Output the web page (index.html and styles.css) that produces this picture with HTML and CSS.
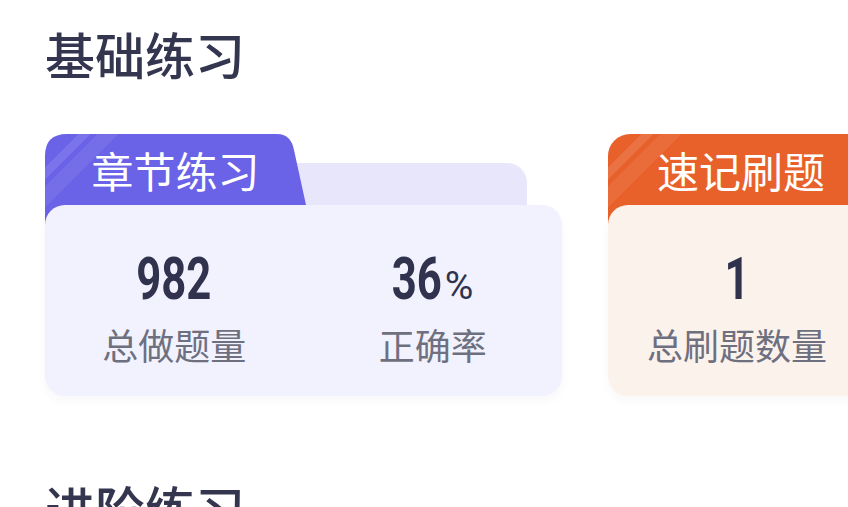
FILE: index.html
```html
<!DOCTYPE html>
<html lang="zh-CN">
<head>
<meta charset="utf-8">
<title>基础练习</title>
<link rel="stylesheet" href="styles.css">
</head>
<body>
<main class="page">
  <h2 class="section-title">基础练习</h2>
  <div class="cards">
    <section class="group group-chapter">
      <div class="group-head">
        <div class="tab tab-purple">章节练习</div>
        <div class="tab-back"></div>
      </div>
      <div class="card card-purple">
        <div class="stat">
          <div class="num"><span class="digits d3">982</span></div>
          <div class="label">总做题量</div>
        </div>
        <div class="stat">
          <div class="num"><span class="digits d2">36</span><span class="pct">%</span></div>
          <div class="label">正确率</div>
        </div>
      </div>
    </section>
    <section class="group group-quick">
      <div class="group-head">
        <div class="tab tab-orange">速记刷题</div>
      </div>
      <div class="card card-orange">
        <div class="stat">
          <div class="num"><span class="digits d1">1</span></div>
          <div class="label">总刷题数量</div>
        </div>
      </div>
    </section>
  </div>
  <h2 class="section-title next">进阶练习</h2>
</main>
</body>
</html>
```
FILE: styles.css
```css
html, body {
  margin: 0;
  padding: 0;
  background: #ffffff;
  overflow: hidden;
}

.page {
  padding: 28px 0 0 45px;
  width: 848px;
  height: 507px;
  box-sizing: border-box;
  font-family: "Noto Sans CJK SC", "Noto Sans", sans-serif;
}

.section-title {
  margin: 0;
  font-size: 50px;
  line-height: 50px;
  font-weight: 500;
  color: #34364f;
  white-space: nowrap;
}

.section-title.next {
  margin-top: 86px;
}

.cards {
  display: flex;
  gap: 46px;
  margin-top: 56px;
  width: 900px;
}

.group {
  flex: none;
  display: flex;
  flex-direction: column;
}

.group-chapter {
  width: 517px;
}

.group-quick {
  width: 266px;
}

.group-head {
  height: 71px;
  display: flex;
  align-items: flex-end;
}

.tab {
  align-self: flex-start;
  flex: none;
  height: 91px;
  margin-bottom: -20px;
  box-sizing: border-box;
  padding-top: 15px;
  text-align: center;
  font-size: 42px;
  line-height: 42px;
  font-weight: 400;
  color: #ffffff;
  position: relative;
  z-index: 1;
  white-space: nowrap;
}

.tab-purple {
  width: 261px;
  background-color: #6a62e7;
  background-image: linear-gradient(135deg,
      rgba(255,255,255,0) 0 24px,
      rgba(255,255,255,0.11) 24px 32px,
      rgba(255,255,255,0) 32px 37px,
      rgba(255,255,255,0.07) 37px 52px,
      rgba(255,255,255,0) 52px);
  clip-path: path('M0 22 Q0 0 22 0 L232 0 Q246 0 249 16 L261 71 L261 91 L0 91 Z');
}

.tab-orange {
  width: 266px;
  background-color: #e8612b;
  background-image: linear-gradient(135deg,
      rgba(255,255,255,0) 0 24px,
      rgba(255,255,255,0.11) 24px 32px,
      rgba(255,255,255,0) 32px 37px,
      rgba(255,255,255,0.07) 37px 52px,
      rgba(255,255,255,0) 52px);
  border-radius: 22px 22px 0 0;
}

.tab-back {
  flex: none;
  width: 237px;
  height: 62px;
  margin-left: -16px;
  margin-bottom: -20px;
  background: #e7e6fa;
  border-radius: 0 20px 0 0;
  position: relative;
  z-index: 0;
}

.card {
  position: relative;
  z-index: 2;
  height: 191px;
  box-sizing: border-box;
  padding-top: 45px;
  border-radius: 20px;
  display: grid;
  box-shadow: 0 5px 10px rgba(60, 60, 120, 0.035);
}

.card-purple {
  width: 517px;
  background: #f1f2fd;
  grid-template-columns: 1fr 1fr;
}

.card-orange {
  width: 258px;
  background: #fcf2ec;
  grid-template-columns: 1fr;
}

.stat {
  text-align: center;
}

.num {
  font-family: Roboto, "Liberation Sans", sans-serif;
  font-size: 59px;
  line-height: 58px;
  height: 58px;
  font-weight: 700;
  color: #30324e;
  white-space: nowrap;
}

.digits {
  display: inline-block;
  transform: scaleX(0.74);
  transform-origin: center;
}

.d3 {
  margin: 0 -13px;
}

.d2 {
  margin: 0 -9px 0 -9px;
}

.d1 {
  margin: 0 -4px;
}

.pct {
  font-family: Roboto, "Liberation Sans", sans-serif;
  font-size: 39px;
  line-height: 1;
  font-weight: 400;
  margin-left: 3px;
}

.label {
  margin-top: 18px;
  font-size: 36px;
  line-height: 36px;
  font-weight: 400;
  color: #6e7080;
  white-space: nowrap;
}
```
